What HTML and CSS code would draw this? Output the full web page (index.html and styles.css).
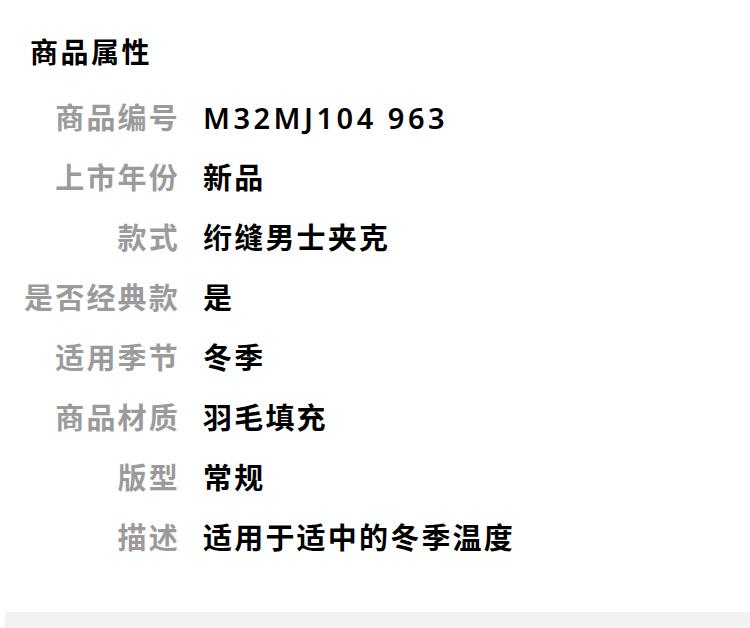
FILE: index.html
```html
<!DOCTYPE html>
<html lang="zh-CN">
<head>
    <meta charset="UTF-8">
    <meta name="viewport" content="width=device-width, initial-scale=1.0">
    <title>商品属性</title>
    <link rel="stylesheet" href="styles.css">
</head>
<body>

    <section class="attrs">
        <h2>商品属性</h2>

        <dl class="attr-list">
            <dt>商品编号</dt>
            <dd class="num">M32MJ104 963</dd>

            <dt>上市年份</dt>
            <dd>新品</dd>

            <dt>款式</dt>
            <dd>绗缝男士夹克</dd>

            <dt>是否经典款</dt>
            <dd>是</dd>

            <dt>适用季节</dt>
            <dd>冬季</dd>

            <dt>商品材质</dt>
            <dd>羽毛填充</dd>

            <dt>版型</dt>
            <dd>常规</dd>

            <dt>描述</dt>
            <dd>适用于适中的冬季温度</dd>
        </dl>
    </section>

    <div class="divider"></div>

</body>
</html>
```

FILE: styles.css
```css
* {
    margin: 0;
    padding: 0;
    box-sizing: border-box;
}
body {
    font-family: "Noto Sans CJK SC", "Noto Sans", sans-serif;
    background-color: #fff;
    color: #000;
}
.attrs {
    padding-top: 21px;
}
.attrs h2 {
    font-size: 28px;
    font-weight: 700;
    line-height: 60px;
    letter-spacing: 2.5px;
    padding-left: 30px;
    margin-bottom: 5px;
}
.attr-list {
    display: grid;
    grid-template-columns: 180px 1fr;
    column-gap: 23px;
}
.attr-list dt,
.attr-list dd {
    font-size: 29px;
    font-weight: 700;
    line-height: 60px;
    letter-spacing: 2.2px;
}
.attr-list dt {
    text-align: right;
    color: #9b9b9b;
}
.attr-list dd {
    color: #000;
}
.attr-list .num {
    font-family: "Noto Sans", sans-serif;
    font-size: 29px;
    font-weight: 600;
    letter-spacing: 3.5px;
    line-height: 57px;
    padding-top: 3px;
}
.divider {
    margin: 46px 0 0 5px;
    height: 30px;
    background-color: #f2f2f2;
}
```
